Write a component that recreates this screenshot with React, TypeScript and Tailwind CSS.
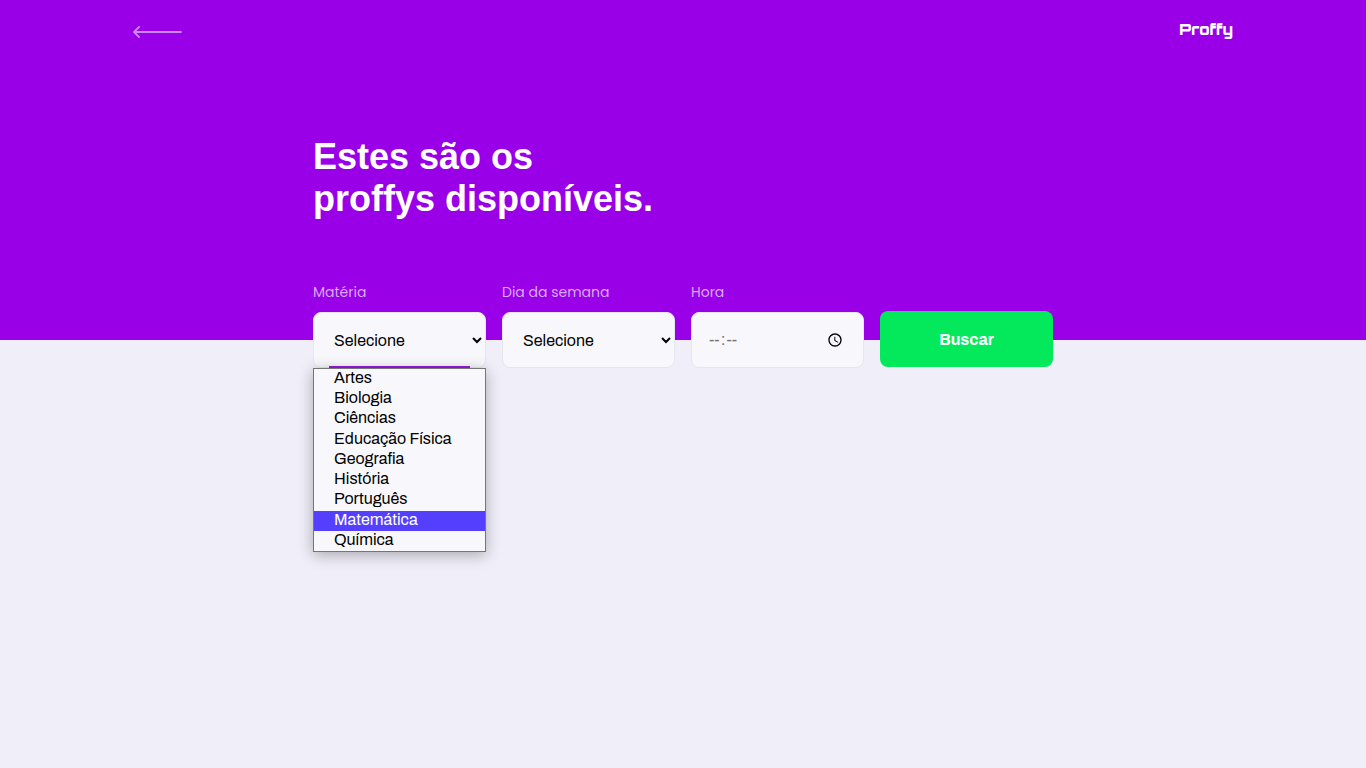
import { useState } from "react";

const subjects = [
  "Artes",
  "Biologia",
  "Ciências",
  "Educação Física",
  "Geografia",
  "História",
  "Português",
  "Matemática",
  "Química",
];

const weekDays = [
  "Domingo",
  "Segunda-feira",
  "Terça-feira",
  "Quarta-feira",
  "Quinta-feira",
  "Sexta-feira",
  "Sábado",
];

const fieldClass =
  "h-14 w-full rounded-lg border border-[#e6e6f0] bg-[#f8f8fc] px-4 text-base outline-none";
const labelClass =
  "mb-2 block font-['Poppins','Lato',sans-serif] text-sm leading-6 text-[#d8a8f7]";

function BackArrow() {
  return (
    <svg width="50" height="14" viewBox="0 0 50 14" fill="none" aria-hidden="true">
      <path
        d="M6 2 1 7l5 5M1 7h47"
        stroke="#cc85f4"
        strokeWidth="1.800"
        strokeLinecap="round"
        strokeLinejoin="round"
      />
    </svg>
  );
}

export default function App() {
  const [subject, setSubject] = useState("");
  const [open, setOpen] = useState(true);

  return (
    <div className="min-h-screen bg-[#f0eff9] font-['Archivo','Liberation_Sans',sans-serif]">
      <header className="bg-[#9900e8]">
        <div className="mx-auto flex h-16 w-full max-w-[1100px] items-center justify-between">
          <a href="#voltar" aria-label="Voltar">
            <BackArrow />
          </a>
          <span className="pb-1 font-['Orbitron','DejaVu_Sans',sans-serif] text-[15px] font-black leading-6 text-white">
            Proffy
          </span>
        </div>
        <div className="mx-auto w-full max-w-[740px] pt-[72px] pb-[120px]">
          <h1 className="max-w-[350px] font-['Liberation_Sans',sans-serif] text-4xl font-bold leading-[42px] text-white">
            Estes são os
            <br />
            proffys disponíveis.
          </h1>
        </div>
      </header>

      <main className="mx-auto w-full max-w-[740px]">
        <form
          className="-mt-[60px] grid grid-cols-4 items-end gap-4"
          onSubmit={(event) => event.preventDefault()}
        >
          <div className="relative">
            <label htmlFor="subject" className={labelClass}>
              Matéria
            </label>
            <select
              id="subject"
              value={subject}
              onChange={(event) => setSubject(event.target.value)}
              className={`${fieldClass} text-black`}
            >
              <option value="">Selecione</option>
              {subjects.map((name) => (
                <option key={name}>{name}</option>
              ))}
            </select>
            {open && (
              <>
                <div className="absolute inset-x-4 bottom-0 h-0.5 bg-[#9418d8]" />
                <ul
                  role="listbox"
                  aria-label="Matérias"
                  className="absolute inset-x-0 top-full grid h-[184px] auto-rows-fr border border-[#767676] bg-[#f8f8fc] text-base leading-[18px] text-black shadow-[0_3px_14px_rgba(0,0,0,0.3)]"
                >
                  {subjects.map((name) => (
                    <li
                      key={name}
                      role="option"
                      aria-selected={name === "Matemática"}
                      onClick={() => {
                        setSubject(name);
                        setOpen(false);
                      }}
                      className="min-h-0 cursor-default pl-5 aria-selected:bg-[#543fff] aria-selected:text-white"
                    >
                      {name}
                    </li>
                  ))}
                </ul>
              </>
            )}
          </div>

          <div>
            <label htmlFor="week-day" className={labelClass}>
              Dia da semana
            </label>
            <select id="week-day" defaultValue="" className={`${fieldClass} text-black`}>
              <option value="">Selecione</option>
              {weekDays.map((day) => (
                <option key={day}>{day}</option>
              ))}
            </select>
          </div>

          <div>
            <label htmlFor="time" className={labelClass}>
              Hora
            </label>
            <input
              id="time"
              type="time"
              className={`${fieldClass} text-[#757575] [&::-webkit-datetime-edit-ampm-field]:hidden`}
            />
          </div>

          <button
            type="submit"
            className="mb-px h-14 w-full rounded-lg bg-[#04e95c] pt-0.5 text-base font-bold text-white"
          >
            Buscar
          </button>
        </form>
      </main>
    </div>
  );
}
